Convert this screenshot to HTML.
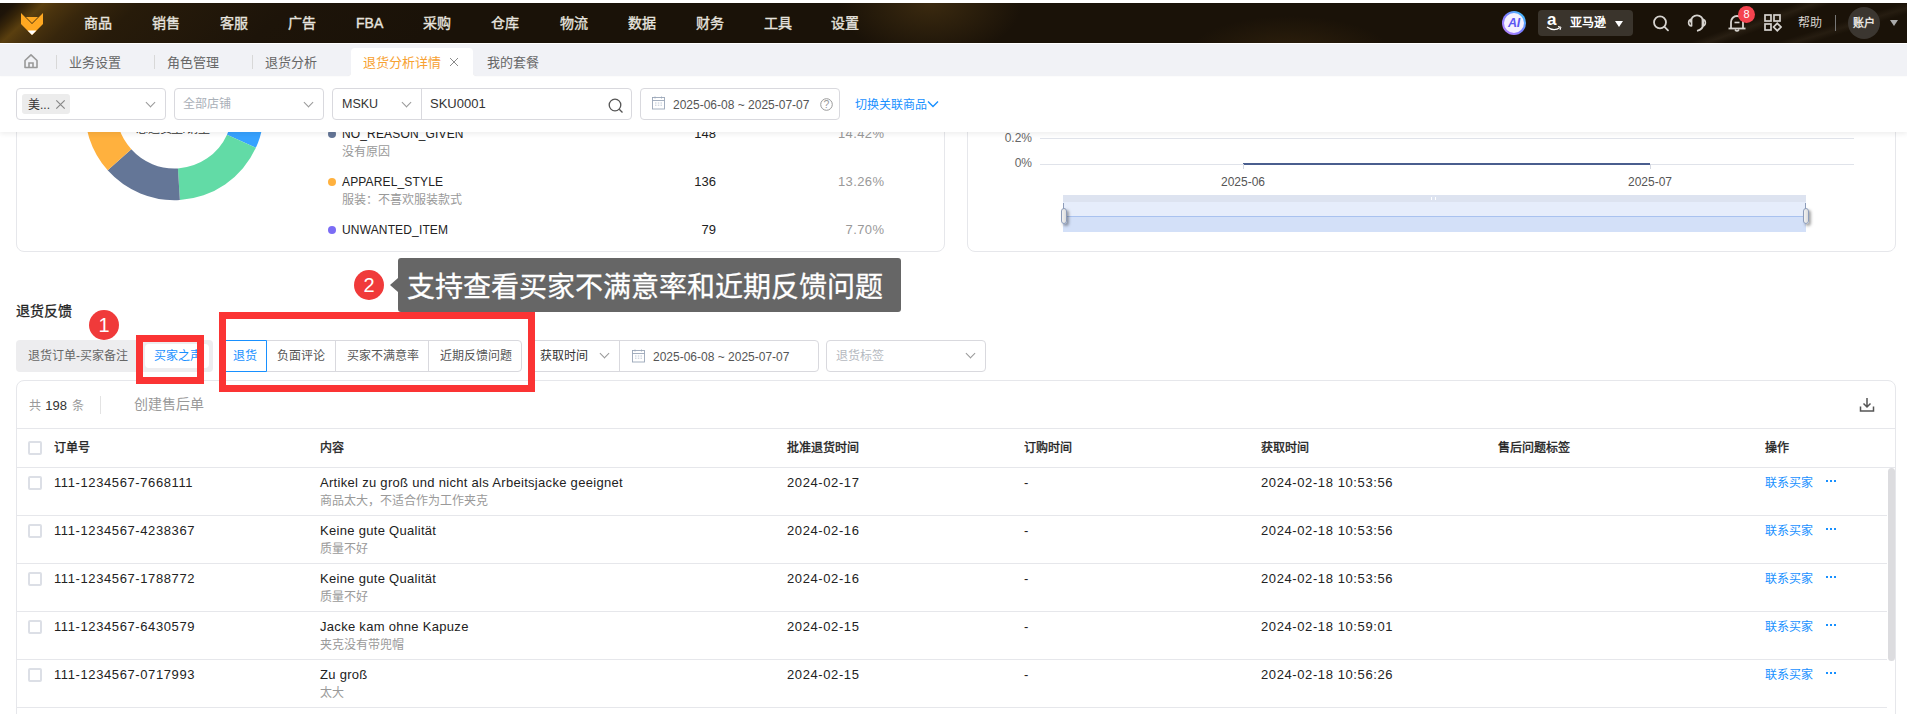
<!DOCTYPE html>
<html lang="zh-CN"><head><meta charset="utf-8">
<style>
*{box-sizing:border-box;margin:0;padding:0}
html,body{width:1907px;height:714px;overflow:hidden;background:#fff;font-family:"Liberation Sans",sans-serif;color:#333}
.a{position:absolute;white-space:nowrap}
#hdr{position:absolute;z-index:10;left:0;top:3px;width:1907px;height:40px;background:#1a1208;overflow:hidden}
.nav{position:absolute;top:0;height:40px;line-height:40px;font-size:14px;color:#e6e3df;font-weight:500;-webkit-text-stroke:0.35px #e6e3df}
#tabs{position:absolute;z-index:10;left:0;top:43px;width:1907px;height:33px;background:#fff}
.tab{position:absolute;top:0;height:33px;line-height:40px;font-size:13px;color:#666}
.tsep{position:absolute;top:12px;width:1px;height:14px;background:#d8d8d8}
#filter{position:absolute;left:0;top:76px;width:1907px;height:56px;background:#fff;box-shadow:0 2px 5px rgba(0,0,0,.07);z-index:5}
.box{position:absolute;border:1px solid #d9d9de;border-radius:4px;background:#fff}
.card{position:absolute;border:1px solid #e6e7eb;border-radius:8px;background:#fff}
.chev{position:absolute;width:7px;height:7px;border-right:1px solid #999;border-bottom:1px solid #999;transform:rotate(45deg)}
.leg{font-size:12px;line-height:16px;color:#222;letter-spacing:0.15px}
.legs{font-size:12px;line-height:16px;color:#999}
.num{width:100px;text-align:right;font-size:13px;line-height:16px;color:#222}
.pct{width:100.4px;text-align:right;font-size:13px;line-height:16px;color:#999;letter-spacing:0.4px}
.ylab{width:52px;text-align:right;font-size:12px;line-height:16px;color:#666}
.xlab{width:100px;text-align:center;font-size:12px;line-height:16px;color:#555}
.handle{width:6px;height:16px;background:linear-gradient(90deg,#f2f2f2,#dcdcdc);border:1px solid #8d9cb9;border-radius:3px;box-shadow:2px 2px 3px rgba(0,0,0,.35)}
.cb{position:absolute;width:14px;height:14px;border:2px solid #dcdfe6;border-radius:2px;background:#fff}
.th{top:440px;line-height:16px;font-size:12px;font-weight:500;color:#222;-webkit-text-stroke:0.35px #222}
.td{margin-top:1px;line-height:16px;font-size:13px;color:#222;letter-spacing:0.6px}
.td2{margin-top:1px;line-height:16px;font-size:13px;color:#222;letter-spacing:0.3px}
.sub{margin-top:1px;line-height:16px;font-size:12px;color:#9a9a9a}
.op{margin-top:1px;line-height:16px;font-size:12px;color:#1890ff}
.dots{width:10px;height:2px;margin-top:1px;background:linear-gradient(90deg,#1890ff 0,#1890ff 2px,transparent 2px,transparent 4px,#1890ff 4px,#1890ff 6px,transparent 6px,transparent 8px,#1890ff 8px,#1890ff 10px)}
.badge{position:absolute;width:30px;height:30px;border-radius:50%;background:#f03a3a;color:#fff;font-size:20px;line-height:30px;text-align:center;z-index:4}
</style></head><body>

<!-- header -->
<div id="hdr">
  <div class="a" style="left:0;top:0;width:420px;height:40px;background:linear-gradient(137deg,#1a1208 0px,#1e1409 10px,#352409 19px,#5a3f0f 30px,#4b340e 40px,#37260c 62px,#271b0a 96px,#1d1409 200px,#1a1208 315px)"></div>
  <div class="a" style="left:830px;top:-60px;width:200px;height:120px;background:radial-gradient(ellipse at center,rgba(70,50,18,.75) 0%,rgba(26,18,8,0) 65%)"></div>
  <div class="a" style="left:1180px;top:10px;width:220px;height:80px;background:radial-gradient(ellipse at center,rgba(60,42,15,.6) 0%,rgba(26,18,8,0) 65%)"></div>
  <svg class="a" style="left:20px;top:9px" width="24" height="24" viewBox="0 0 24 24">
    <path d="M1 1 L12 12 L23 1 L23 12 L12 23 L1 12 Z" fill="#ffa821"/>
    <path d="M6 5 L18 5 L12 11 Z" fill="#ffa821"/>
    <path d="M7.5 18.5 L16.5 18.5 L12 23 Z" fill="#fff"/>
  </svg>
  <div class="nav" style="left:84px">商品</div>
  <div class="nav" style="left:152px">销售</div>
  <div class="nav" style="left:220px">客服</div>
  <div class="nav" style="left:288px">广告</div>
  <div class="nav" style="left:356px">FBA</div>
  <div class="nav" style="left:423px">采购</div>
  <div class="nav" style="left:491px">仓库</div>
  <div class="nav" style="left:560px">物流</div>
  <div class="nav" style="left:628px">数据</div>
  <div class="nav" style="left:696px">财务</div>
  <div class="nav" style="left:764px">工具</div>
  <div class="nav" style="left:831px">设置</div>

  <div class="a" style="left:1560px;top:0;width:347px;height:40px;background:linear-gradient(160deg,transparent 0,transparent 52%,rgba(90,75,55,.22) 56%,transparent 60%),linear-gradient(163deg,transparent 0,transparent 72%,rgba(90,75,55,.18) 76%,transparent 80%)"></div>
  <div class="a" style="left:1502px;top:8px;width:24px;height:24px;border-radius:50%;background:linear-gradient(225deg,#33d0ff,#7a7cff 50%,#c486ff)"></div>
  <div class="a" style="left:1504px;top:10px;width:20px;height:20px;border-radius:50%;background:#f4f0ff"></div>
  <div class="a" style="left:1502px;top:8px;width:24px;height:24px;line-height:24px;text-align:center;font-size:12.5px;font-weight:bold;font-style:italic;color:#5b56f2;letter-spacing:-0.3px">AI</div>
  <div class="a" style="left:1538px;top:7px;width:95px;height:26px;background:#3a342c;border-radius:4px"></div>
  <div class="a" style="left:1547px;top:5px;font-size:17px;line-height:24px;font-weight:bold;color:#fff">a</div>
  <svg class="a" style="left:1546px;top:23px" width="16" height="6" viewBox="0 0 16 6"><path d="M1 1 Q8 6 14 1.5" fill="none" stroke="#fff" stroke-width="1.3"/><path d="M12 0.5 L15 1.2 L14 4" fill="none" stroke="#fff" stroke-width="1"/></svg>
  <div class="a" style="left:1570px;top:7px;line-height:26px;font-size:12px;font-weight:bold;color:#fff">亚马逊</div>
  <div class="a" style="left:1615px;top:18px;width:0;height:0;border-left:4px solid transparent;border-right:4px solid transparent;border-top:6px solid #fff"></div>
  <svg class="a" style="left:1652px;top:12px" width="18" height="18" viewBox="0 0 18 18"><circle cx="8" cy="7.3" r="6" fill="none" stroke="#d6d3cf" stroke-width="1.8"/><path d="M12.3 11.6 L16 15.3" stroke="#d6d3cf" stroke-width="1.8" stroke-linecap="round"/></svg>
  <svg class="a" style="left:1687px;top:10px" width="20" height="20" viewBox="0 0 20 20"><path d="M3.8 9.5 V8.5 A6.2 6.2 0 0 1 16.2 8.5 V11 Q16.2 16.5 10 17.8" fill="none" stroke="#d6d3cf" stroke-width="1.8"/><path d="M4.6 6.4 Q1.6 6.8 1.6 9.7 Q1.6 12.6 4.6 13 Z M15.4 6.4 Q18.4 6.8 18.4 9.7 Q18.4 12.6 15.4 13 Z" fill="none" stroke="#d6d3cf" stroke-width="1.6" stroke-linejoin="round"/></svg>
  <svg class="a" style="left:1727px;top:10px" width="20" height="20" viewBox="0 0 20 20"><path d="M4 15 V9 A6 6 0 0 1 16 9 V15" fill="none" stroke="#d6d3cf" stroke-width="1.8"/><path d="M1.5 15.5 H18.5" stroke="#d6d3cf" stroke-width="1.8"/><path d="M7.5 9.5 H12.5" stroke="#d6d3cf" stroke-width="1.6"/><path d="M8 16.5 Q10 19.5 12 16.5" fill="none" stroke="#d6d3cf" stroke-width="1.6"/></svg>
  <div class="a" style="left:1738px;top:3px;width:17px;height:17px;border-radius:50%;background:#f5434f;color:#fff;font-size:11px;line-height:17px;text-align:center">8</div>
  <svg class="a" style="left:1764px;top:11px" width="18" height="18" viewBox="0 0 18 18"><rect x="1" y="1" width="6" height="6" fill="none" stroke="#d6d3cf" stroke-width="1.7"/><rect x="10" y="1" width="6" height="6" fill="none" stroke="#d6d3cf" stroke-width="1.7"/><rect x="1" y="10" width="6" height="6" fill="none" stroke="#d6d3cf" stroke-width="1.7"/><path d="M13.3 9.3 L17 13 L13.3 16.7 L9.6 13 Z" fill="none" stroke="#d6d3cf" stroke-width="1.7"/></svg>
  <div class="a" style="left:1798px;top:0;line-height:40px;font-size:12px;color:#d6d3cf;font-weight:500">帮助</div>
  <div class="a" style="left:1835px;top:12px;width:1px;height:16px;background:#777"></div>
  <div class="a" style="left:1848px;top:4px;width:32px;height:32px;border-radius:50%;background:#3b3630"></div>
  <div class="a" style="left:1848px;top:4px;width:32px;line-height:32px;text-align:center;font-size:11px;font-weight:bold;color:#e8e5e0">账户</div>
  <div class="a" style="left:1890px;top:17px;width:0;height:0;border-left:4px solid transparent;border-right:4px solid transparent;border-top:6px solid #aaa"></div>
</div>

<!-- tabs -->
<div id="tabs">
  <div class="a" style="left:0;top:0;width:351px;height:33px;background:#f1f2f6;border-radius:0 0 4px 0;box-shadow:0 0 1px rgba(0,0,0,.12)"></div>
  <div class="a" style="left:473px;top:0;width:1434px;height:33px;background:#f1f2f6;border-radius:0 0 0 4px;box-shadow:0 0 1px rgba(0,0,0,.12)"></div>
  <div class="a" style="left:345px;top:0;width:134px;height:10px;background:#f1f2f6"></div>
  <div class="a" style="left:351px;top:5px;width:122px;height:28px;background:#fff;border-radius:4px 4px 0 0"></div>
  <div class="a" style="left:0;top:0;width:1907px;height:1px;background:#fff"></div>
  <svg class="a" style="left:23px;top:10px" width="16" height="16" viewBox="0 0 16 16"><path d="M2 7.5 L8 1.8 L14 7.5 L14 14.5 L2 14.5 Z" fill="none" stroke="#999" stroke-width="1.6" stroke-linejoin="round"/><path d="M6 14.5 L6 10 L10 10 L10 14.5" fill="none" stroke="#999" stroke-width="1.6"/></svg>
  <div class="tsep" style="left:56px"></div>
  <div class="tab" style="left:69px">业务设置</div>
  <div class="tsep" style="left:154px"></div>
  <div class="tab" style="left:167px">角色管理</div>
  <div class="tsep" style="left:252px"></div>
  <div class="tab" style="left:265px">退货分析</div>
  <div class="tab" style="left:363px;color:#f7a131">退货分析详情</div>
  <svg class="a" style="left:449px;top:14px" width="10" height="10" viewBox="0 0 10 10"><path d="M1 1 L9 9 M9 1 L1 9" stroke="#8a8a8a" stroke-width="1"/></svg>
  <div class="tab" style="left:487px">我的套餐</div>
</div>


<!-- content (scrolled) -->
<div class="card" style="left:16px;top:40px;width:929px;height:212px"></div>
<div class="card" style="left:967px;top:40px;width:929px;height:212px"></div>
<svg class="a" style="left:0;top:0" width="300" height="260" viewBox="0 0 300 260"><path d="M174.40 21.20 A89.5 89.5 0 0 1 255.84 147.82 L227.00 134.67 A57.8 57.8 0 0 0 174.40 52.90 Z" fill="#37a2ff"/><path d="M255.84 147.82 A89.5 89.5 0 0 1 179.86 200.03 L177.93 168.39 A57.8 57.8 0 0 0 227.00 134.67 Z" fill="#62dba6"/><path d="M179.86 200.03 A89.5 89.5 0 0 1 107.68 170.35 L131.31 149.23 A57.8 57.8 0 0 0 177.93 168.39 Z" fill="#647697"/><path d="M107.68 170.35 A89.5 89.5 0 0 1 85.37 101.50 L116.91 104.76 A57.8 57.8 0 0 0 131.31 149.23 Z" fill="#ffb13e"/><path d="M85.37 101.50 A89.5 89.5 0 0 1 99.85 61.17 L126.26 78.71 A57.8 57.8 0 0 0 116.91 104.76 Z" fill="#7b6cf5"/><path d="M99.85 61.17 A89.5 89.5 0 0 1 174.40 21.20 L174.40 52.90 A57.8 57.8 0 0 0 126.26 78.71 Z" fill="#f5b54c"/></svg>
<div class="a" style="left:134px;top:122px;width:78px;text-align:center;font-size:12px;line-height:14px;color:#333;letter-spacing:-0.3px">总退货量/销量</div>

<div class="a" style="left:328px;top:130px;width:8px;height:8px;border-radius:50%;background:#647697"></div>
<div class="a leg" style="left:342px;top:126px">NO_REASON_GIVEN</div>
<div class="a legs" style="left:342px;top:144px">没有原因</div>
<div class="a num" style="left:616px;top:126px">148</div>
<div class="a pct" style="left:784px;top:126px">14.42%</div>

<div class="a" style="left:328px;top:178px;width:8px;height:8px;border-radius:50%;background:#ffb13e"></div>
<div class="a leg" style="left:342px;top:174px">APPAREL_STYLE</div>
<div class="a legs" style="left:342px;top:192px">服装：不喜欢服装款式</div>
<div class="a num" style="left:616px;top:174px">136</div>
<div class="a pct" style="left:784px;top:174px">13.26%</div>

<div class="a" style="left:328px;top:226px;width:8px;height:8px;border-radius:50%;background:#7b6cf5"></div>
<div class="a leg" style="left:342px;top:222px">UNWANTED_ITEM</div>
<div class="a num" style="left:616px;top:222px">79</div>
<div class="a pct" style="left:784px;top:222px">7.70%</div>

<!-- line chart -->
<div class="a ylab" style="left:980px;top:130px">0.2%</div>
<div class="a ylab" style="left:980px;top:155px">0%</div>
<div class="a" style="left:1040px;top:138px;width:814px;height:1px;background:#e0e3ea"></div>
<div class="a" style="left:1040px;top:164px;width:814px;height:1px;background:#e0e3ea"></div>
<div class="a" style="left:1243px;top:163px;width:407px;height:2px;background:#4a5e8e"></div>
<div class="a" style="left:1243px;top:164px;width:1px;height:5px;background:#d5d9e2"></div>
<div class="a" style="left:1650px;top:164px;width:1px;height:5px;background:#d5d9e2"></div>
<div class="a xlab" style="left:1193px;top:174px">2025-06</div>
<div class="a xlab" style="left:1600px;top:174px">2025-07</div>
<div class="a" style="left:1063px;top:195px;width:743px;height:37px;background:#d3e0f8"></div>
<div class="a" style="left:1063px;top:195px;width:743px;height:7px;background:#dde3f0"></div>
<div class="a" style="left:1063px;top:202px;width:743px;height:14px;background:#e6edfb"></div>
<div class="a" style="left:1063px;top:216px;width:743px;height:1px;background:#a9c2ef"></div>
<div class="a" style="left:1431px;top:197px;width:5px;height:3px;border-left:1px solid #fff;border-right:1px solid #fff"></div>
<div class="a" style="left:1063px;top:203px;width:1px;height:7px;background:#8d9cb9"></div><div class="a handle" style="left:1061px;top:208px"></div>
<div class="a" style="left:1805px;top:203px;width:1px;height:7px;background:#8d9cb9"></div><div class="a handle" style="left:1803px;top:208px"></div>


<!-- feedback section -->
<div class="a" style="left:16px;top:302px;font-size:14px;line-height:18px;font-weight:500;color:#222;-webkit-text-stroke:0.3px #222">退货反馈</div>
<div class="a" style="left:16px;top:340px;width:197px;height:32px;background:#ededef;border-radius:4px"></div>
<div class="a" style="left:145px;top:344px;width:64px;height:24px;background:#fff;border-radius:4px"></div>
<div class="a" style="left:28px;top:340px;height:32px;line-height:32px;font-size:12px;color:#666">退货订单-买家备注</div>
<div class="a" style="left:154px;top:340px;width:43px;overflow:hidden;height:32px;line-height:32px;font-size:12px;color:#1890ff">买家之声</div>

<div class="box" style="left:222px;top:340px;width:300px;height:32px"></div>
<div class="a" style="left:222px;top:340px;width:45px;height:32px;border:1px solid #1890ff;border-radius:4px 0 0 4px"></div>
<div class="a" style="left:233px;top:340px;line-height:32px;font-size:12px;color:#1890ff">退货</div>
<div class="a" style="left:277px;top:340px;line-height:32px;font-size:12px;color:#555">负面评论</div>
<div class="a" style="left:335px;top:341px;width:1px;height:30px;background:#d9d9de"></div>
<div class="a" style="left:347px;top:340px;line-height:32px;font-size:12px;color:#555">买家不满意率</div>
<div class="a" style="left:428px;top:341px;width:1px;height:30px;background:#d9d9de"></div>
<div class="a" style="left:440px;top:340px;line-height:32px;font-size:12px;color:#555">近期反馈问题</div>

<div class="box" style="left:528px;top:340px;width:291px;height:32px"></div>
<div class="a" style="left:540px;top:340px;line-height:32px;font-size:12px;color:#333">获取时间</div>
<div class="chev" style="left:601px;top:350px"></div>
<div class="a" style="left:619px;top:341px;width:1px;height:30px;background:#d9d9de"></div>
<svg class="a" style="left:632px;top:349px" width="14" height="14" viewBox="0 0 14 14"><rect x="0.5" y="1.5" width="12" height="11.5" fill="none" stroke="#9aa6b8" stroke-width="0.9"/><path d="M0.5 4.5 H12.5" stroke="#9aa6b8" stroke-width="0.9"/><path d="M3 0.5 V2.5 M9.5 0.5 V2.5" stroke="#9aa6b8" stroke-width="0.8"/><path d="M3 7 H4.5 M5.8 7 H7.3 M8.5 7 H10 M3 9.2 H4.5 M5.8 9.2 H7.3 M8.5 9.2 H10" stroke="#b8c2d0" stroke-width="0.9"/></svg>
<div class="a" style="left:653px;top:341px;line-height:32px;font-size:12px;color:#555">2025-06-08 ~ 2025-07-07</div>
<div class="box" style="left:826px;top:340px;width:160px;height:32px"></div>
<div class="a" style="left:836px;top:340px;line-height:32px;font-size:12px;color:#b5b9c0">退货标签</div>
<div class="chev" style="left:967px;top:350px"></div>

<!-- table card -->
<div class="card" style="left:16px;top:380px;width:1880px;height:400px"></div>
<div class="a" style="left:29px;top:397px;line-height:18px;font-size:12px;color:#999">共 <span style="color:#333;font-size:13px;margin:0 2px 0 1px">198</span> 条</div>
<div class="a" style="left:100px;top:396px;width:1px;height:18px;background:#e3e3e3"></div>
<div class="a" style="left:134px;top:395px;line-height:18px;font-size:14px;color:#999">创建售后单</div>
<svg class="a" style="left:1859px;top:397px" width="16" height="16" viewBox="0 0 16 16"><path d="M8 1 V10 M4.5 6.5 L8 10 L11.5 6.5" fill="none" stroke="#555" stroke-width="1.5"/><path d="M1.5 9.5 V14 H14.5 V9.5" fill="none" stroke="#555" stroke-width="1.5"/></svg>
<div class="a" style="left:17px;top:428px;width:1878px;height:1px;background:#e6e7eb"></div>
<div class="a" style="left:17px;top:467px;width:1878px;height:1px;background:#e6e7eb"></div>
<div class="cb" style="left:28px;top:441px"></div>
<div class="a th" style="left:54px">订单号</div>
<div class="a th" style="left:320px">内容</div>
<div class="a th" style="left:787px">批准退货时间</div>
<div class="a th" style="left:1024px">订购时间</div>
<div class="a th" style="left:1261px">获取时间</div>
<div class="a th" style="left:1498px">售后问题标签</div>
<div class="a th" style="left:1765px">操作</div>
<div class="a" style="left:1888px;top:468px;width:7px;height:193px;background:#dcdcdf;border-radius:4px"></div>
<div class="cb" style="left:28px;top:476px"></div>
<div class="a td" style="left:54px;top:474px">111-1234567-7668111</div>
<div class="a td2" style="left:320px;top:474px">Artikel zu groß und nicht als Arbeitsjacke geeignet</div>
<div class="a sub" style="left:320px;top:492px">商品太大，不适合作为工作夹克</div>
<div class="a td" style="left:787px;top:474px">2024-02-17</div>
<div class="a td" style="left:1024px;top:474px">-</div>
<div class="a td" style="left:1261px;top:474px">2024-02-18 10:53:56</div>
<div class="a op" style="left:1765px;top:474px">联系买家</div>
<div class="a dots" style="left:1826px;top:479px"></div>
<div class="a" style="left:17px;top:515px;width:1870px;height:1px;background:#e6e7eb"></div>
<div class="cb" style="left:28px;top:524px"></div>
<div class="a td" style="left:54px;top:522px">111-1234567-4238367</div>
<div class="a td2" style="left:320px;top:522px">Keine gute Qualität</div>
<div class="a sub" style="left:320px;top:540px">质量不好</div>
<div class="a td" style="left:787px;top:522px">2024-02-16</div>
<div class="a td" style="left:1024px;top:522px">-</div>
<div class="a td" style="left:1261px;top:522px">2024-02-18 10:53:56</div>
<div class="a op" style="left:1765px;top:522px">联系买家</div>
<div class="a dots" style="left:1826px;top:527px"></div>
<div class="a" style="left:17px;top:563px;width:1870px;height:1px;background:#e6e7eb"></div>
<div class="cb" style="left:28px;top:572px"></div>
<div class="a td" style="left:54px;top:570px">111-1234567-1788772</div>
<div class="a td2" style="left:320px;top:570px">Keine gute Qualität</div>
<div class="a sub" style="left:320px;top:588px">质量不好</div>
<div class="a td" style="left:787px;top:570px">2024-02-16</div>
<div class="a td" style="left:1024px;top:570px">-</div>
<div class="a td" style="left:1261px;top:570px">2024-02-18 10:53:56</div>
<div class="a op" style="left:1765px;top:570px">联系买家</div>
<div class="a dots" style="left:1826px;top:575px"></div>
<div class="a" style="left:17px;top:611px;width:1870px;height:1px;background:#e6e7eb"></div>
<div class="cb" style="left:28px;top:620px"></div>
<div class="a td" style="left:54px;top:618px">111-1234567-6430579</div>
<div class="a td2" style="left:320px;top:618px">Jacke kam ohne Kapuze</div>
<div class="a sub" style="left:320px;top:636px">夹克没有带兜帽</div>
<div class="a td" style="left:787px;top:618px">2024-02-15</div>
<div class="a td" style="left:1024px;top:618px">-</div>
<div class="a td" style="left:1261px;top:618px">2024-02-18 10:59:01</div>
<div class="a op" style="left:1765px;top:618px">联系买家</div>
<div class="a dots" style="left:1826px;top:623px"></div>
<div class="a" style="left:17px;top:659px;width:1870px;height:1px;background:#e6e7eb"></div>
<div class="cb" style="left:28px;top:668px"></div>
<div class="a td" style="left:54px;top:666px">111-1234567-0717993</div>
<div class="a td2" style="left:320px;top:666px">Zu groß</div>
<div class="a sub" style="left:320px;top:684px">太大</div>
<div class="a td" style="left:787px;top:666px">2024-02-15</div>
<div class="a td" style="left:1024px;top:666px">-</div>
<div class="a td" style="left:1261px;top:666px">2024-02-18 10:56:26</div>
<div class="a op" style="left:1765px;top:666px">联系买家</div>
<div class="a dots" style="left:1826px;top:671px"></div>
<div class="a" style="left:17px;top:707px;width:1870px;height:1px;background:#e6e7eb"></div>

<!-- annotations -->
<div class="a" style="left:136px;top:335px;width:68px;height:49px;border:7px solid #fb3434;z-index:3"></div>
<div class="a" style="left:219px;top:312px;width:316px;height:80px;border:7px solid #fb3434;z-index:3"></div>
<div class="badge" style="left:89px;top:310px">1</div>
<div class="badge" style="left:354px;top:270px">2</div>
<div class="a" style="left:398px;top:258px;width:503px;height:54px;background:#666;border-radius:3px;z-index:4"></div>
<div class="a" style="left:390px;top:278px;width:0;height:0;border-top:7px solid transparent;border-bottom:7px solid transparent;border-right:8px solid #666;z-index:4"></div>
<div class="a" style="left:407px;top:261px;line-height:54px;font-size:28px;color:#fff;z-index:4;-webkit-text-stroke:0.3px #fff">支持查看买家不满意率和近期反馈问题</div>

<!-- filter bar -->
<div id="filter">
  <div class="box" style="left:16px;top:12px;width:150px;height:32px"></div>
  <div class="a" style="left:22px;top:18px;width:48px;height:20px;background:#ececec;border-radius:3px"></div>
  <div class="a" style="left:28px;top:19px;height:20px;line-height:20px;font-size:12px;color:#333">美...</div>
  <svg class="a" style="left:55px;top:23px" width="11" height="11" viewBox="0 0 11 11"><path d="M1.3 1.3 L9.7 9.7 M9.7 1.3 L1.3 9.7" stroke="#888" stroke-width="1.2"/></svg>
  <div class="chev" style="left:147px;top:23px"></div>

  <div class="box" style="left:174px;top:12px;width:150px;height:32px"></div>
  <div class="a" style="left:183px;top:12px;height:32px;line-height:32px;font-size:12px;color:#aab0b8">全部店铺</div>
  <div class="chev" style="left:305px;top:23px"></div>

  <div class="box" style="left:332px;top:12px;width:300px;height:32px"></div>
  <div class="a" style="left:421px;top:13px;width:1px;height:30px;background:#d9d9de"></div>
  <div class="a" style="left:342px;top:12px;height:32px;line-height:32px;font-size:12.5px;color:#333">MSKU</div>
  <div class="chev" style="left:403px;top:23px"></div>
  <div class="a" style="left:430px;top:12px;height:32px;line-height:32px;font-size:13px;color:#333">SKU0001</div>
  <svg class="a" style="left:608px;top:22px" width="16" height="16" viewBox="0 0 16 16"><circle cx="7" cy="7" r="5.8" fill="none" stroke="#555" stroke-width="1.3"/><path d="M11.2 11.2 L14.5 14.5" stroke="#555" stroke-width="1.3"/></svg>

  <div class="box" style="left:640px;top:12px;width:200px;height:32px"></div>
  <svg class="a" style="left:652px;top:20px" width="14" height="14" viewBox="0 0 14 14"><rect x="0.5" y="1.5" width="12" height="11.5" fill="none" stroke="#9aa6b8" stroke-width="0.9"/><path d="M0.5 4.5 H12.5" stroke="#9aa6b8" stroke-width="0.9"/><path d="M3 0.5 V2.5 M9.5 0.5 V2.5" stroke="#9aa6b8" stroke-width="0.8"/><path d="M3 7 H4.5 M5.8 7 H7.3 M8.5 7 H10 M3 9.2 H4.5 M5.8 9.2 H7.3 M8.5 9.2 H10" stroke="#b8c2d0" stroke-width="0.9"/></svg>
  <div class="a" style="left:673px;top:13px;height:32px;line-height:32px;font-size:12px;color:#555">2025-06-08 ~ 2025-07-07</div>
  <svg class="a" style="left:820px;top:22px" width="13" height="13" viewBox="0 0 13 13"><circle cx="6.5" cy="6.5" r="5.8" fill="none" stroke="#999" stroke-width="1"/><text x="6.5" y="10.2" text-anchor="middle" font-size="10.5" fill="#999" font-family="Liberation Sans">?</text></svg>
  <div class="a" style="left:855px;top:13px;height:32px;line-height:32px;font-size:12px;color:#1890ff">切换关联商品</div>
  <svg class="a" style="left:927px;top:24px" width="12" height="8" viewBox="0 0 12 8"><path d="M1 1.5 L6 6.5 L11 1.5" fill="none" stroke="#1890ff" stroke-width="1.4"/></svg>
</div>

</body></html>
